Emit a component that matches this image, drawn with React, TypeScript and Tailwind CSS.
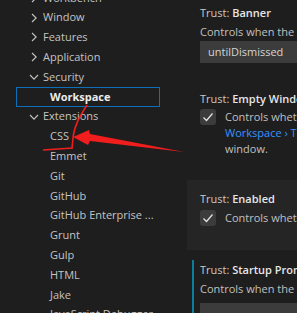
const font = "font-['Open_Sans',sans-serif]";

function Chevron({ open }: { open?: boolean }) {
  return (
    <svg width="10" height="10" viewBox="0 0 10 10" className="shrink-0">
      {open ? (
        <path d="M1 3 L5 7.2 L9 3" fill="none" stroke="#c5c5c5" strokeWidth="1.1" />
      ) : (
        <path d="M3 1 L7.2 5 L3 9" fill="none" stroke="#c5c5c5" strokeWidth="1.1" />
      )}
    </svg>
  );
}

function Check() {
  return (
    <div className="w-[16px] h-[16px] shrink-0 rounded-[3px] bg-[#3c3c3c] flex items-center justify-center">
      <svg width="12" height="12" viewBox="0 0 12 12">
        <path d="M1.5 6.5 L4.5 9.5 L10.5 2.5" fill="none" stroke="#e6e6e6" strokeWidth="1.2" />
      </svg>
    </div>
  );
}

const topLevel = [
  { label: "Workbench" },
  { label: "Window" },
  { label: "Features" },
  { label: "Application" },
  { label: "Security", open: true },
];

const extensions = ["CSS", "Emmet", "Git", "GitHub", "GitHub Enterprise ...", "Grunt", "Gulp", "HTML", "Jake", "JavaScript Debugger"];

function Title({ name }: { name: string }) {
  return (
    <div className="h-[16px] leading-[16px] whitespace-nowrap">
      <span className="text-[#c8c8c8]">Trust: </span>
      <span className="font-semibold text-[#e7e7e7]">{name}</span>
    </div>
  );
}

export default function App() {
  return (
    <div className={`relative w-[297px] h-[313px] overflow-hidden bg-[#1e1e1e] flex text-[11px] ${font}`}>
      {/* Table of contents */}
      <div className="w-[187px] shrink-0 pl-[16px]">
        <div className="-mt-[12px] w-[144px]">
          {topLevel.map((t) => (
            <div key={t.label} className="h-[19.8px] flex items-center pl-[13px] gap-[4px] text-[#c4c4c4] whitespace-nowrap">
              <Chevron open={t.open} />
              <span>{t.label}</span>
            </div>
          ))}
          <div className="h-[19.8px] flex items-center pl-[33px] border border-[#0e6fb8] font-bold text-[#ececec]">
            Workspace
          </div>
          <div className="h-[19.8px] flex items-center pl-[13px] gap-[4px] text-[#c4c4c4]">
            <Chevron open />
            <span>Extensions</span>
          </div>
          {extensions.map((e) => (
            <div key={e} className="h-[19.8px] flex items-center pl-[34px] text-[#c4c4c4] whitespace-nowrap">
              {e}
            </div>
          ))}
        </div>
      </div>

      {/* Settings list */}
      <div className="flex-1 min-w-0 overflow-hidden text-[#c0c0c0]">
        <div className="pl-[13px] pt-[5px]">
          <Title name="Banner" />
          <div className="mt-[3px] leading-[16px] whitespace-nowrap">Controls when the restricted mode banner is shown.</div>
          <div className="mt-[1px] w-[200px] h-[22px] bg-[#3c3c3c] pl-[8px] flex items-center text-[#d4d4d4]">
            untilDismissed
          </div>
        </div>

        <div className="pl-[13px] mt-[28px]">
          <Title name="Empty Window" />
          <div className="mt-[2px] flex items-start gap-[9px]">
            <Check />
            <div className="leading-[16px] whitespace-nowrap">
              <div>Controls whether or not the empty</div>
              <div>
                <span className="text-[#3794ff]">Workspace › Trust: Untrusted Files</span>
              </div>
              <div>window.</div>
            </div>
          </div>
        </div>

        <div className="mt-[23px] bg-[#252526] pl-[13px] pt-[11px] pb-[24px]">
          <Title name="Enabled" />
          <div className="mt-[3px] flex items-start gap-[9px]">
            <Check />
            <div className="leading-[16px] whitespace-nowrap">Controls whether or not Workspace Trust is enabled</div>
          </div>
        </div>

        <div className="mt-[10px] ml-[5px] border-l-2 border-[#0c7d9d] pl-[6px] pt-[2px] pb-[20px]">
          <Title name="Startup Prompt" />
          <div className="mt-[3px] leading-[16px] whitespace-nowrap">Controls when the startup prompt is shown.</div>
          <div className="mt-[6px] w-[200px] h-[22px] bg-[#3c3c3c]" />
        </div>
      </div>

      {/* Red annotation */}
      <svg className="absolute inset-0 pointer-events-none" width="297" height="313" viewBox="0 0 297 313">
        <path d="M87 105 C 80 116, 74 126, 73 138 L 72 148" fill="none" stroke="#f21d1d" strokeWidth="1.5" />
        <path d="M43 150 L 73 148" fill="none" stroke="#f21d1d" strokeWidth="1.5" />
        <polygon points="73,137 89,130 90,134 184,152 90,141 88,145" fill="#f21d1d" />
      </svg>
    </div>
  );
}
